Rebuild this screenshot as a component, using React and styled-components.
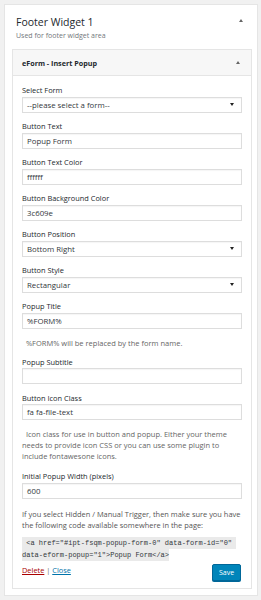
import React from "react";
import styled, { createGlobalStyle } from "styled-components";

const Global = createGlobalStyle`
  html, body { margin: 0; padding: 0; background: #f1f1f1; }
  body { font-family: "Open Sans", "Noto Sans", sans-serif; color: #23282d; }
  * { box-sizing: border-box; }
`;

const Outer = styled.div`
  margin: 4px 3px 3px 4px;
  background: #fff;
  border: 1px solid #e5e5e5;
  padding: 0 5px 6px 7px;
`;

const OuterHead = styled.div`
  display: flex;
  align-items: flex-start;
  justify-content: space-between;
  padding: 10px 9px 0 4px;
`;

const Title = styled.div`
  font-size: 10.5px;
  line-height: 14px;
  color: #23282d;
`;

const Caret = styled.span`
  display: inline-block;
  width: 0;
  height: 0;
  border-left: 2.5px solid transparent;
  border-right: 2.5px solid transparent;
  border-${(p) => (p.$down ? "top" : "bottom")}: 3px solid ${(p) => p.$color || "#555"};
  margin-top: ${(p) => p.$top || 0}px;
`;

const Sub = styled.div`
  font-size: 7px;
  line-height: 10px;
  color: #72777c;
  padding-left: 4px;
  margin-top: 2px;
`;

const Inner = styled.div`
  margin-top: 8px;
  border: 1px solid #e5e5e5;
  background: #fff;
`;

const InnerHead = styled.div`
  height: 26px;
  background: #f7f7f7;
  border-bottom: 1px solid #e5e5e5;
  display: flex;
  align-items: center;
  justify-content: space-between;
  padding: 0 11px 0 9px;
  font-size: 7.2px;
  font-weight: 700;
  color: #23282d;
`;

const Body = styled.div`
  padding: 10px 9px 7px 9px;
`;

const Field = styled.div`
  margin-bottom: ${(p) => (p.$mb != null ? p.$mb : 9.5)}px;
`;

const Label = styled.div`
  font-size: 7.4px;
  line-height: 9px;
  margin-bottom: 1.5px;
  color: #23282d;
`;

const Box = styled.div`
  height: 16px;
  border: 1px solid #ddd;
  box-shadow: inset 0 1px 1px rgba(0, 0, 0, 0.04);
  display: flex;
  align-items: center;
  justify-content: space-between;
  padding: 0 7px 0 4px;
  font-size: 7.8px;
  color: #32373c;
  background: #fff;
`;

const Help = styled.div`
  font-size: 7.5px;
  line-height: 11px;
  color: #666;
  margin-top: 9px;
`;

const Para = styled.p`
  margin: 0;
  font-size: 7.45px;
  line-height: 11px;
  color: #555;
`;

const CodeWrap = styled.div`
  margin-top: 6px;
  font-size: 7px;
  line-height: 12px;
`;

const Code = styled.code`
  font-family: "Liberation Mono", "DejaVu Sans Mono", monospace;
  font-size: 7px;
  line-height: 12px;
  background: #eaeaea;
  color: #32373c;
  white-space: pre-wrap;
  padding: 2px 0;
`;

const Actions = styled.div`
  display: flex;
  align-items: flex-start;
  justify-content: space-between;
  margin-top: 3px;
  padding-right: 1px;
`;

const Links = styled.div`
  font-size: 7.4px;
  line-height: 10px;
  color: #666;
  margin-top: 1px;
`;

const A = styled.a`
  color: ${(p) => p.$color};
  text-decoration: underline;
`;

const Save = styled.button`
  width: 29px;
  height: 17px;
  border: 1px solid #006799;
  border-radius: 2px;
  background: #0085ba;
  color: #fff;
  font-family: inherit;
  font-size: 7px;
  padding: 0;
  box-shadow: 0 1px 0 #006799;
`;

function Input({ children }) {
  return <Box>{children}</Box>;
}

function Select({ children }) {
  return (
    <Box>
      <span>{children}</span>
      <Caret $down $color="#222" />
    </Box>
  );
}

export default function App() {
  return (
    <>
      <Global />
      <Outer>
        <OuterHead>
          <Title>Footer Widget 1</Title>
          <Caret $top={4} $color="#666" />
        </OuterHead>
        <Sub>Used for footer widget area</Sub>
        <Inner>
          <InnerHead>
            <span>eForm - Insert Popup</span>
            <Caret $color="#666" />
          </InnerHead>
          <Body>
            <Field>
              <Label>Select Form</Label>
              <Select>--please select a form--</Select>
            </Field>
            <Field>
              <Label>Button Text</Label>
              <Input>Popup Form</Input>
            </Field>
            <Field>
              <Label>Button Text Color</Label>
              <Input>ffffff</Input>
            </Field>
            <Field>
              <Label>Button Background Color</Label>
              <Input>3c609e</Input>
            </Field>
            <Field>
              <Label>Button Position</Label>
              <Select>Bottom Right</Select>
            </Field>
            <Field>
              <Label>Button Style</Label>
              <Select>Rectangular</Select>
            </Field>
            <Field $mb={9}>
              <Label>Popup Title</Label>
              <Input>%FORM%</Input>
              <Help>&nbsp;&nbsp;%FORM% will be replaced by the form name.</Help>
            </Field>
            <Field>
              <Label>Popup Subtitle</Label>
              <Input></Input>
            </Field>
            <Field $mb={10}>
              <Label>Button Icon Class</Label>
              <Input>fa fa-file-text</Input>
              <Help>
                &nbsp;&nbsp;Icon class for use in button and popup. Either your theme needs
                to provide icon CSS or you can use some plugin to include fontawesone icons.
              </Help>
            </Field>
            <Field $mb={10}>
              <Label>Initial Popup Width (pixels)</Label>
              <Input>600</Input>
            </Field>
            <Para>
              If you select Hidden / Manual Trigger, then make sure you have the following
              code available somewhere in the page:
            </Para>
            <CodeWrap>
              <Code>{' <a href="#ipt-fsqm-popup-form-0" data-form-id="0" data-eform-popup="1">Popup Form</a>'}</Code>
            </CodeWrap>
            <Actions>
              <Links>
                <A href="#" $color="#a00">Delete</A> | <A href="#" $color="#0073aa">Close</A>
              </Links>
              <Save>Save</Save>
            </Actions>
          </Body>
        </Inner>
      </Outer>
    </>
  );
}
